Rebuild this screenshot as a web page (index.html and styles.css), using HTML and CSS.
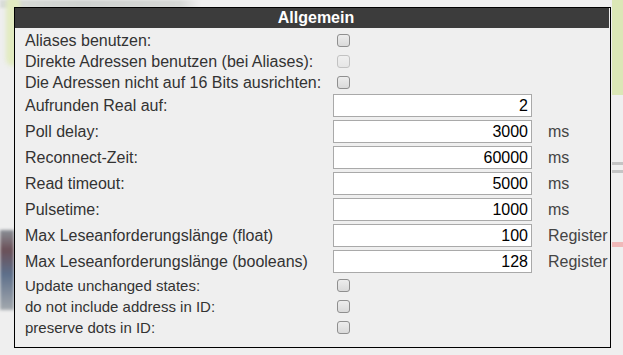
FILE: index.html
```html
<!DOCTYPE html>
<html lang="de">
<head>
<meta charset="utf-8">
<title>Allgemein</title>
<link rel="stylesheet" href="styles.css">
</head>
<body>
<div class="backdrop" aria-hidden="true">
  <div class="bg-top"></div>
  <div class="bg-green-left"></div>
  <div class="bg-device"></div>
  <div class="bg-green-right"></div>
  <div class="bg-line bg-line1"></div>
  <div class="bg-line bg-line2"></div>
  <div class="bg-pink"></div>
</div>
<div class="dialog">
  <div class="header">Allgemein</div>
  <div class="form">
    <div class="row check-row"><label class="lbl">Aliases benutzen:</label><span class="val"><input type="checkbox" class="cb"></span><span class="unit"></span></div>
    <div class="row check-row"><label class="lbl">Direkte Adressen benutzen (bei Aliases):</label><span class="val"><input type="checkbox" class="cb" disabled></span><span class="unit"></span></div>
    <div class="row check-row"><label class="lbl">Die Adressen nicht auf 16 Bits ausrichten:</label><span class="val"><input type="checkbox" class="cb"></span><span class="unit"></span></div>
    <div class="row input-row"><label class="lbl">Aufrunden Real auf:</label><span class="val"><input type="text" class="num" value="2"></span><span class="unit"></span></div>
    <div class="row input-row"><label class="lbl">Poll delay:</label><span class="val"><input type="text" class="num" value="3000"></span><span class="unit">ms</span></div>
    <div class="row input-row"><label class="lbl">Reconnect-Zeit:</label><span class="val"><input type="text" class="num" value="60000"></span><span class="unit">ms</span></div>
    <div class="row input-row"><label class="lbl">Read timeout:</label><span class="val"><input type="text" class="num" value="5000"></span><span class="unit">ms</span></div>
    <div class="row input-row"><label class="lbl">Pulsetime:</label><span class="val"><input type="text" class="num" value="1000"></span><span class="unit">ms</span></div>
    <div class="row input-row"><label class="lbl">Max Leseanforderungslänge (float)</label><span class="val"><input type="text" class="num" value="100"></span><span class="unit">Register</span></div>
    <div class="row input-row"><label class="lbl">Max Leseanforderungslänge (booleans)</label><span class="val"><input type="text" class="num" value="128"></span><span class="unit">Register</span></div>
    <div class="row check-row small"><label class="lbl">Update unchanged states:</label><span class="val"><input type="checkbox" class="cb"></span><span class="unit"></span></div>
    <div class="row check-row small"><label class="lbl">do not include address in ID:</label><span class="val"><input type="checkbox" class="cb"></span><span class="unit"></span></div>
    <div class="row check-row small"><label class="lbl">preserve dots in ID:</label><span class="val"><input type="checkbox" class="cb"></span><span class="unit"></span></div>
  </div>
</div>
</body>
</html>
```
FILE: styles.css
```css
* { box-sizing: border-box; }
html, body {
  margin: 0;
  padding: 0;
  width: 623px;
  height: 355px;
  overflow: hidden;
  background: #efefef;
  font-family: "Liberation Sans", Arial, sans-serif;
}
body { position: relative; }

.backdrop {
  position: absolute;
  inset: 0;
  z-index: 0;
}
.bg-top {
  position: absolute;
  left: 0; top: 0;
  width: 200px; height: 8px;
  background: linear-gradient(90deg, #d9dcd9, #cfd2d0 40%, #d6d8d6 90%, #efefef);
  filter: blur(1px);
}
.bg-green-left {
  position: absolute;
  left: 6px; top: -4px;
  width: 14px; height: 70px;
  background: #e2ebc0;
  border-radius: 7px;
  filter: blur(2px);
}
.bg-device {
  position: absolute;
  left: 0; top: 230px;
  width: 14px; height: 80px;
  background: linear-gradient(180deg, #8a8f96, #6b5058 25%, #5d6f8a 55%, #a4a9ae 100%);
  filter: blur(1.5px);
}
.bg-green-right {
  position: absolute;
  left: 612px; top: 0;
  width: 11px; height: 95px;
  background: #dbe7b6;
}
.bg-line {
  position: absolute;
  left: 612px;
  width: 11px; height: 3px;
  background: #c4c4c4;
  filter: blur(0.6px);
}
.bg-line1 { top: 162px; }
.bg-line2 { top: 170px; }
.bg-pink {
  position: absolute;
  left: 612px; top: 242px;
  width: 11px; height: 5px;
  background: #f0b9b9;
}

.dialog {
  position: relative;
  z-index: 1;
  margin: 7px 0 0 14px;
  width: 597px;
  height: 341px;
  border: 1px solid #000;
  background: #efefef;
}
.header {
  height: 20px;
  margin-right: 1px;
  background: #3c3c3c;
  color: #fff;
  font-weight: bold;
  font-size: 16px;
  line-height: 20px;
  text-align: center;
  padding-left: 8px;
}
.form {
  padding: 2px 0 0 10px;
  display: flex;
  flex-direction: column;
}
.row {
  display: grid;
  grid-template-columns: 308px 199px auto;
  align-items: center;
  color: #333;
  font-size: 16px;
}
.check-row { height: 21px; }
.input-row { height: 26px; }
.input-row .val { align-self: start; padding-top: 1px; }
.small { height: 21px; font-size: 15px; }
.lbl { white-space: nowrap; }
.unit { color: #444; padding-left: 16px; white-space: nowrap; }
.val { display: flex; align-items: center; }

.cb {
  appearance: none;
  -webkit-appearance: none;
  margin: 0 0 0 4px;
  width: 13px;
  height: 13px;
  border: 1px solid #8f8f8f;
  border-radius: 3px;
  background: linear-gradient(#ededed, #dadada);
}
.cb:disabled {
  border-color: #c2c2c2;
  background: linear-gradient(#f0f0f0, #e6e6e6);
}
.num {
  width: 199px;
  height: 23px;
  margin: 0;
  border: 1px solid #a9a9a9;
  background: #fff;
  font-family: "Liberation Sans", Arial, sans-serif;
  font-size: 16px;
  color: #000;
  text-align: right;
  padding: 0 3px 0 2px;
}
```
